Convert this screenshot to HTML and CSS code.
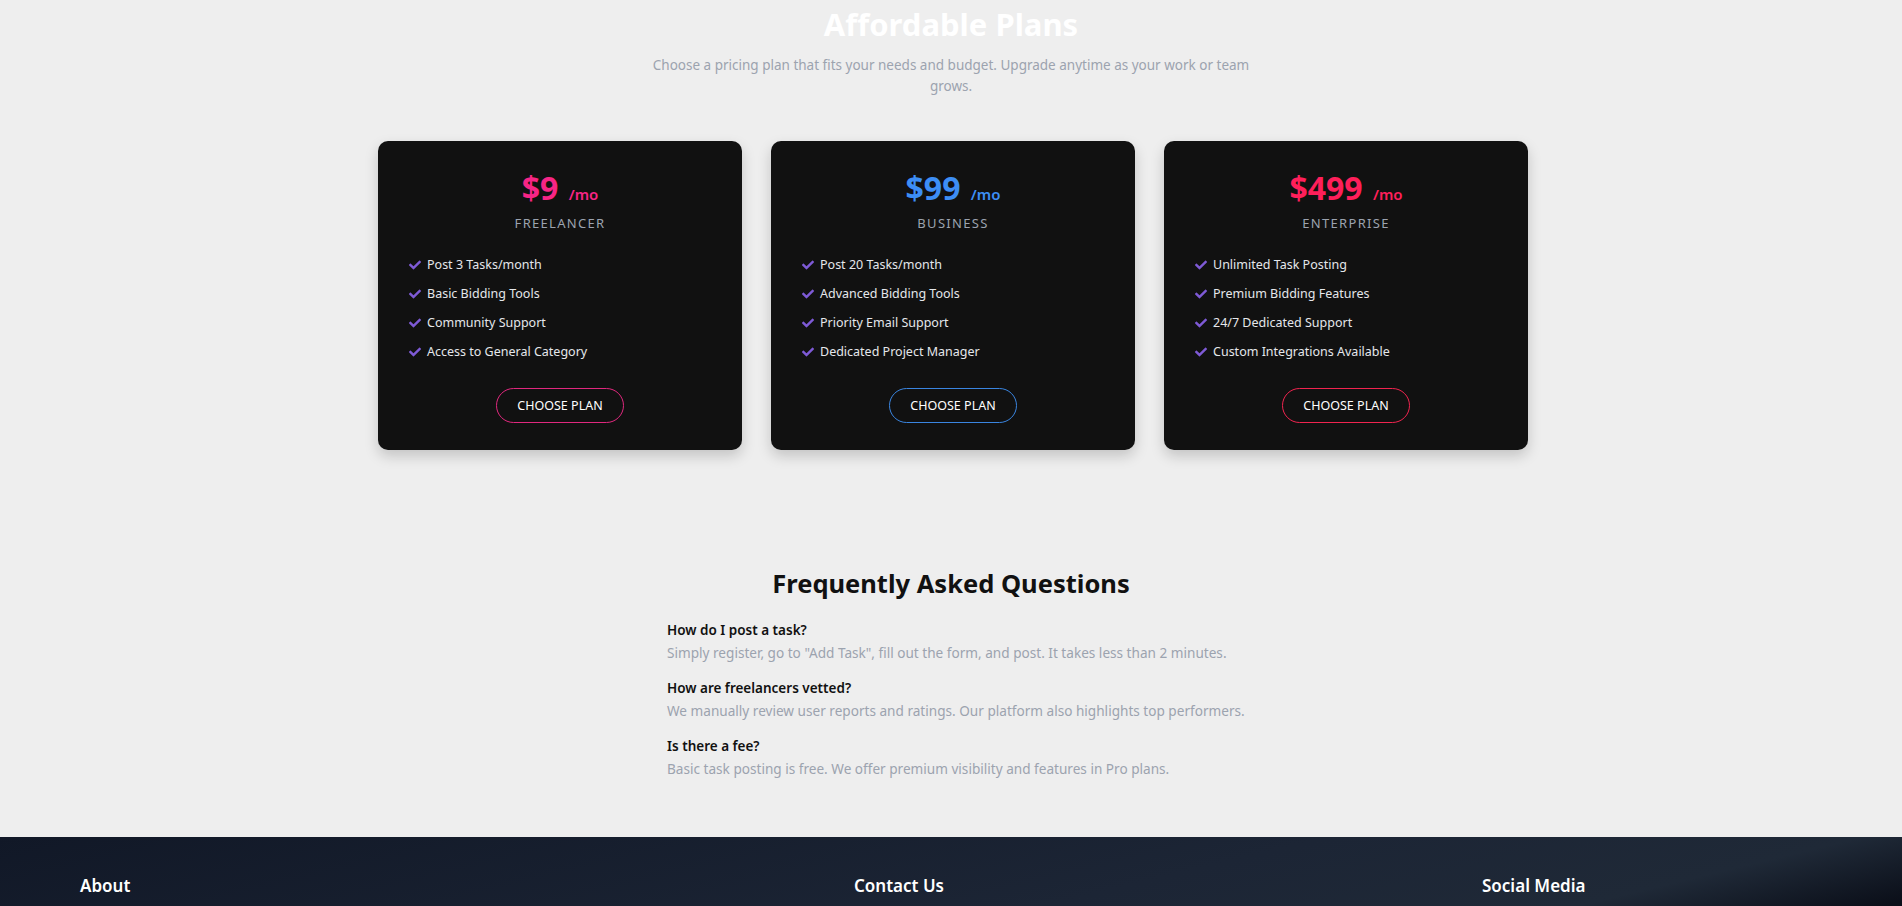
FILE: index.html
```html
<!DOCTYPE html>
<html lang="en">
<head>
<meta charset="utf-8">
<title>Pricing</title>
<link rel="stylesheet" href="styles.css">
</head>
<body>
<section class="pricing">
  <h2 class="pricing-title">Affordable Plans</h2>
  <p class="pricing-sub">Choose a pricing plan that fits your needs and budget. Upgrade anytime as your work or team grows.</p>
  <div class="plans">
    <div class="plan plan-pink">
      <div class="price">$9 <span class="per">/mo</span></div>
      <div class="tier">FREELANCER</div>
      <ul class="features">
        <li><svg class="check" viewBox="0 0 512 512"><path d="M173.9 439.4l-166.4-166.4c-10-10-10-26.2 0-36.2l36.2-36.2c10-10 26.2-10 36.2 0L192 312.7 432.1 72.6c10-10 26.2-10 36.2 0l36.2 36.2c10 10 10 26.2 0 36.2l-294.4 294.4c-10 10-26.2 10-36.2 0z"/></svg>Post 3 Tasks/month</li>
        <li><svg class="check" viewBox="0 0 512 512"><path d="M173.9 439.4l-166.4-166.4c-10-10-10-26.2 0-36.2l36.2-36.2c10-10 26.2-10 36.2 0L192 312.7 432.1 72.6c10-10 26.2-10 36.2 0l36.2 36.2c10 10 10 26.2 0 36.2l-294.4 294.4c-10 10-26.2 10-36.2 0z"/></svg>Basic Bidding Tools</li>
        <li><svg class="check" viewBox="0 0 512 512"><path d="M173.9 439.4l-166.4-166.4c-10-10-10-26.2 0-36.2l36.2-36.2c10-10 26.2-10 36.2 0L192 312.7 432.1 72.6c10-10 26.2-10 36.2 0l36.2 36.2c10 10 10 26.2 0 36.2l-294.4 294.4c-10 10-26.2 10-36.2 0z"/></svg>Community Support</li>
        <li><svg class="check" viewBox="0 0 512 512"><path d="M173.9 439.4l-166.4-166.4c-10-10-10-26.2 0-36.2l36.2-36.2c10-10 26.2-10 36.2 0L192 312.7 432.1 72.6c10-10 26.2-10 36.2 0l36.2 36.2c10 10 10 26.2 0 36.2l-294.4 294.4c-10 10-26.2 10-36.2 0z"/></svg>Access to General Category</li>
      </ul>
      <button class="choose">CHOOSE PLAN</button>
    </div>
    <div class="plan plan-blue">
      <div class="price">$99 <span class="per">/mo</span></div>
      <div class="tier">BUSINESS</div>
      <ul class="features">
        <li><svg class="check" viewBox="0 0 512 512"><path d="M173.9 439.4l-166.4-166.4c-10-10-10-26.2 0-36.2l36.2-36.2c10-10 26.2-10 36.2 0L192 312.7 432.1 72.6c10-10 26.2-10 36.2 0l36.2 36.2c10 10 10 26.2 0 36.2l-294.4 294.4c-10 10-26.2 10-36.2 0z"/></svg>Post 20 Tasks/month</li>
        <li><svg class="check" viewBox="0 0 512 512"><path d="M173.9 439.4l-166.4-166.4c-10-10-10-26.2 0-36.2l36.2-36.2c10-10 26.2-10 36.2 0L192 312.7 432.1 72.6c10-10 26.2-10 36.2 0l36.2 36.2c10 10 10 26.2 0 36.2l-294.4 294.4c-10 10-26.2 10-36.2 0z"/></svg>Advanced Bidding Tools</li>
        <li><svg class="check" viewBox="0 0 512 512"><path d="M173.9 439.4l-166.4-166.4c-10-10-10-26.2 0-36.2l36.2-36.2c10-10 26.2-10 36.2 0L192 312.7 432.1 72.6c10-10 26.2-10 36.2 0l36.2 36.2c10 10 10 26.2 0 36.2l-294.4 294.4c-10 10-26.2 10-36.2 0z"/></svg>Priority Email Support</li>
        <li><svg class="check" viewBox="0 0 512 512"><path d="M173.9 439.4l-166.4-166.4c-10-10-10-26.2 0-36.2l36.2-36.2c10-10 26.2-10 36.2 0L192 312.7 432.1 72.6c10-10 26.2-10 36.2 0l36.2 36.2c10 10 10 26.2 0 36.2l-294.4 294.4c-10 10-26.2 10-36.2 0z"/></svg>Dedicated Project Manager</li>
      </ul>
      <button class="choose">CHOOSE PLAN</button>
    </div>
    <div class="plan plan-red">
      <div class="price">$499 <span class="per">/mo</span></div>
      <div class="tier">ENTERPRISE</div>
      <ul class="features">
        <li><svg class="check" viewBox="0 0 512 512"><path d="M173.9 439.4l-166.4-166.4c-10-10-10-26.2 0-36.2l36.2-36.2c10-10 26.2-10 36.2 0L192 312.7 432.1 72.6c10-10 26.2-10 36.2 0l36.2 36.2c10 10 10 26.2 0 36.2l-294.4 294.4c-10 10-26.2 10-36.2 0z"/></svg>Unlimited Task Posting</li>
        <li><svg class="check" viewBox="0 0 512 512"><path d="M173.9 439.4l-166.4-166.4c-10-10-10-26.2 0-36.2l36.2-36.2c10-10 26.2-10 36.2 0L192 312.7 432.1 72.6c10-10 26.2-10 36.2 0l36.2 36.2c10 10 10 26.2 0 36.2l-294.4 294.4c-10 10-26.2 10-36.2 0z"/></svg>Premium Bidding Features</li>
        <li><svg class="check" viewBox="0 0 512 512"><path d="M173.9 439.4l-166.4-166.4c-10-10-10-26.2 0-36.2l36.2-36.2c10-10 26.2-10 36.2 0L192 312.7 432.1 72.6c10-10 26.2-10 36.2 0l36.2 36.2c10 10 10 26.2 0 36.2l-294.4 294.4c-10 10-26.2 10-36.2 0z"/></svg>24/7 Dedicated Support</li>
        <li><svg class="check" viewBox="0 0 512 512"><path d="M173.9 439.4l-166.4-166.4c-10-10-10-26.2 0-36.2l36.2-36.2c10-10 26.2-10 36.2 0L192 312.7 432.1 72.6c10-10 26.2-10 36.2 0l36.2 36.2c10 10 10 26.2 0 36.2l-294.4 294.4c-10 10-26.2 10-36.2 0z"/></svg>Custom Integrations Available</li>
      </ul>
      <button class="choose">CHOOSE PLAN</button>
    </div>
  </div>
</section>

<section class="faq">
  <h2 class="faq-title">Frequently Asked Questions</h2>
  <div class="faq-list">
    <div class="faq-item">
      <h4 class="q">How do I post a task?</h4>
      <p class="a">Simply register, go to "Add Task", fill out the form, and post. It takes less than 2 minutes.</p>
    </div>
    <div class="faq-item">
      <h4 class="q">How are freelancers vetted?</h4>
      <p class="a">We manually review user reports and ratings. Our platform also highlights top performers.</p>
    </div>
    <div class="faq-item">
      <h4 class="q">Is there a fee?</h4>
      <p class="a">Basic task posting is free. We offer premium visibility and features in Pro plans.</p>
    </div>
  </div>
</section>

<footer class="footer">
  <div class="footer-cols">
    <div class="fcol">
      <h3 class="fhead">About</h3>
      <p class="ftext">TaskHub connects clients with skilled freelancers for quick, reliable work.</p>
    </div>
    <div class="fcol">
      <h3 class="fhead">Contact Us</h3>
      <p class="ftext">Email: support@taskhub.com</p>
      <p class="ftext">Phone: +1 (555) 123-4567</p>
    </div>
    <div class="fcol">
      <h3 class="fhead">Social Media</h3>
      <div class="social">
        <a class="slink"><svg class="sicon" viewBox="0 0 16 16"><circle cx="8" cy="8" r="7" fill="#fff"/></svg></a>
        <a class="slink">Twitter</a>
        <a class="slink">LinkedIn</a>
      </div>
    </div>
  </div>
</footer>
</body>
</html>
```

FILE: styles.css
```css
* { box-sizing: border-box; }

body {
  margin: 0;
  background: #eeeeee;
  font-family: "Noto Sans", "Open Sans", Arial, sans-serif;
  color: #111;
}

.pricing {
  display: flex;
  flex-direction: column;
  align-items: center;
  padding: 4px 0 116px;
}

.pricing-title {
  margin: 0;
  font-size: 31px;
  line-height: 40px;
  font-weight: 700;
  color: #ffffff;
}

.pricing-sub {
  margin: 11px 0 0;
  max-width: 610px;
  text-align: center;
  font-size: 13.5px;
  line-height: 21px;
  color: #9ca3af;
}

.plans {
  margin-top: 44px;
  display: grid;
  grid-template-columns: repeat(3, 364px);
  gap: 29px;
  transform: translateX(2px);
}

.plan {
  background: #111111;
  border-radius: 10px;
  padding: 28px 31px 27px;
  display: flex;
  flex-direction: column;
  align-items: center;
  box-shadow: 0 6px 14px rgba(0, 0, 0, 0.18);
}

.price {
  font-size: 32px;
  line-height: 38px;
  font-weight: 700;
}

.per {
  font-size: 15px;
  font-weight: 600;
  margin-left: 2px;
}

.plan-pink .price { color: #f72585; }
.plan-blue .price { color: #3d8ef5; }
.plan-red .price { color: #ff1f5a; }

.tier {
  margin-top: 0;
  font-size: 13px;
  line-height: 20px;
  letter-spacing: 1.3px;
  color: #9ca3af;
}

.features {
  list-style: none;
  margin: 22px 0 0;
  padding: 0;
  align-self: stretch;
  display: flex;
  flex-direction: column;
  gap: 9px;
}

.features li {
  display: flex;
  align-items: center;
  gap: 6px;
  font-size: 12.5px;
  line-height: 20px;
  color: #e5e7eb;
}

.check {
  width: 12px;
  height: 12px;
  fill: #7e5ad6;
  flex: none;
}

.choose {
  margin-top: 26px;
  height: 35px;
  padding: 0 20px;
  border-radius: 20px;
  background: transparent;
  color: #ffffff;
  font-family: inherit;
  font-size: 12.5px;
  cursor: pointer;
}

.plan-pink .choose { border: 1px solid #e0287e; }
.plan-blue .choose { border: 1px solid #3a85e0; }
.plan-red .choose { border: 1px solid #f0244f; }

.faq {
  display: flex;
  flex-direction: column;
  align-items: center;
  padding-bottom: 58px;
}

.faq-title {
  margin: 0;
  font-size: 25.5px;
  line-height: 34px;
  font-weight: 700;
  color: #111;
}

.faq-list {
  margin-top: 20px;
  width: 600px;
  padding-left: 16px;
  display: flex;
  flex-direction: column;
  gap: 15px;
}

.q {
  margin: 0;
  font-size: 13.5px;
  line-height: 21px;
  font-weight: 600;
  color: #111;
}

.a {
  margin: 1px 0 0;
  font-size: 13.6px;
  line-height: 21px;
  color: #9ca3af;
}

.footer {
  min-height: 460px;
  padding: 35px 80px 40px;
  background: linear-gradient(to bottom right, #111827 0%, #1c2535 35%, #1f2937 49%, #0b0f19 57%, #05070d 100%);
  color: #fff;
}

.footer-cols {
  display: grid;
  grid-template-columns: 774px 628px 1fr;
}

.fhead {
  margin: 0;
  font-size: 17px;
  line-height: 27px;
  font-weight: 600;
  color: #ffffff;
}

.ftext {
  margin: 8px 0 0;
  font-size: 14px;
  color: #cbd5e1;
}

.social {
  margin-top: 6px;
  display: flex;
  align-items: center;
  gap: 44px;
  font-size: 14px;
  line-height: 20px;
}

.slink { color: #fff; }

.sicon {
  width: 16px;
  height: 16px;
  display: block;
}
```
